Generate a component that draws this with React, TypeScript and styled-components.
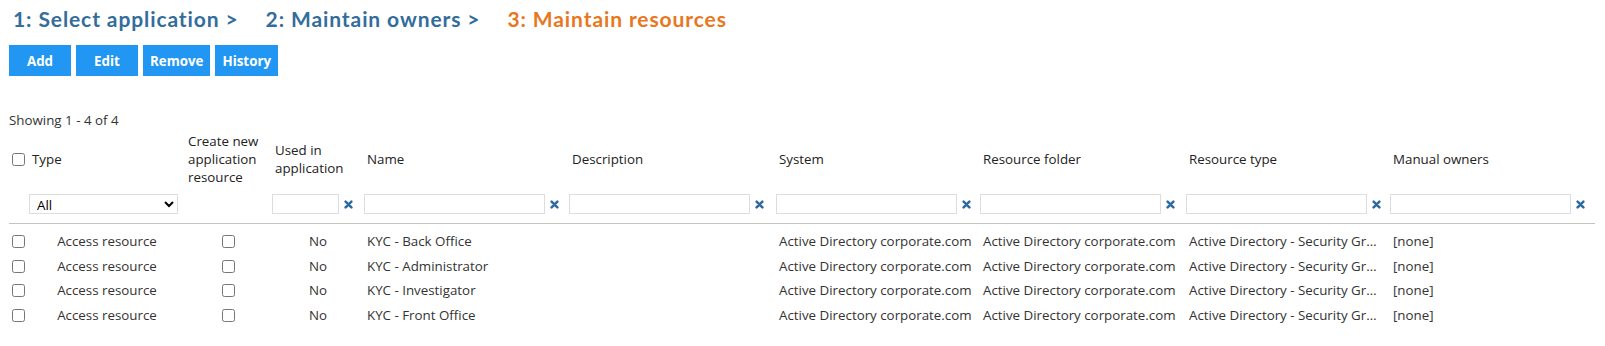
import React from 'react';
import styled, { createGlobalStyle } from 'styled-components';

const GlobalStyle = createGlobalStyle`
  body {
    margin: 0;
    background: #fff;
    font-family: "Open Sans", "Liberation Sans", sans-serif;
    font-size: 13.33px;
    color: #333;
  }
`;

const Page = styled.div`
  padding: 5px 9px 0 9px;
`;

const Steps = styled.div`
  display: flex;
  align-items: baseline;
  gap: 27px;
  padding-left: 4px;
  height: 28px;
`;

const Step = styled.span<{ $active?: boolean }>`
  font-family: Lato, "Open Sans", sans-serif;
  font-weight: 700;
  font-size: 21px;
  letter-spacing: 0.9px;
  line-height: 28px;
  color: ${props => (props.$active ? '#e8771e' : '#336d9c')};
`;

const Toolbar = styled.div`
  display: flex;
  gap: 5px;
  margin-top: 12px;
`;

const ActionButton = styled.button`
  min-width: 62px;
  height: 31px;
  padding: 0 7px;
  border: none;
  background: #2196f3;
  color: #fff;
  font-family: "Open Sans", sans-serif;
  font-weight: 700;
  font-size: 13.33px;
  cursor: pointer;
`;

const Summary = styled.div`
  margin-top: 35px;
  line-height: 18px;
  color: #333;
`;

const Grid = styled.table`
  width: 1586px;
  table-layout: fixed;
  border-collapse: collapse;
  margin-top: -2px;
`;

const HeadCell = styled.th`
  padding: 4px 3px 0 3px;
  height: 56px;
  font-weight: 400;
  text-align: left;
  vertical-align: middle;
  line-height: 18px;
  color: #222;
`;

const FilterCell = styled.td`
  padding: 7px 0 9px 0;
  border-bottom: 1px solid #c4c4c4;
  white-space: nowrap;
  vertical-align: middle;
  height: 20px;
`;

const FilterWrap = styled.div`
  display: flex;
  align-items: center;
  gap: 5px;
`;

const FilterInput = styled.input<{ $w?: number }>`
  box-sizing: border-box;
  width: ${props => props.$w ?? 181}px;
  height: 20px;
  border: 1px solid #ddd;
  padding: 0 4px;
  font-family: "Open Sans", sans-serif;
  font-size: 13px;
  outline: none;
`;

const TypeSelect = styled.select`
  box-sizing: border-box;
  width: 149px;
  height: 20px;
  border: 1px solid #ddd;
  border-radius: 0;
  background: #fff;
  font-family: "Open Sans", sans-serif;
  font-size: 13.33px;
  color: #000;
  padding: 0 3px;
`;

const ClearIcon = styled.svg`
  width: 9px;
  height: 9px;
  flex: none;
  color: #2f6a9e;
`;

const Cell = styled.td<{ $center?: boolean; $clip?: boolean }>`
  padding: 0 ${props => (props.$clip ? '12px' : '3px')} 0 3px;
  height: 24.6px;
  line-height: 18px;
  text-align: ${props => (props.$center ? 'center' : 'left')};
  white-space: nowrap;
  overflow: hidden;
  text-overflow: ${props => (props.$clip ? 'ellipsis' : 'clip')};
  color: #333;
`;

const FirstRow = styled.tr`
  td {
    padding-top: 5px;
  }
`;

const Check = styled.input`
  margin: 3px;
  vertical-align: middle;
`;

const columns = [20, 156, 87, 92, 205, 207, 204, 206, 204, 205];

const rows = [
  'KYC - Back Office',
  'KYC - Administrator',
  'KYC - Investigator',
  'KYC - Front Office',
];

function Clear() {
  return (
    <ClearIcon viewBox="0 0 10 10">
      <path d="M1.8 1.8 L8.2 8.2 M8.2 1.8 L1.8 8.2" stroke="currentColor" strokeWidth="2.8" strokeLinecap="round" />
    </ClearIcon>
  );
}

function TextFilter({ width }: { width?: number }) {
  return (
    <FilterWrap>
      <FilterInput $w={width} />
      <Clear />
    </FilterWrap>
  );
}

function DataRow({ name, first }: { name: string; first: boolean }) {
  const Row = first ? FirstRow : 'tr';
  return (
    <Row>
      <Cell style={{ paddingLeft: 0, paddingRight: 0 }}><Check type="checkbox" /></Cell>
      <Cell $center>Access resource</Cell>
      <Cell $center><Check type="checkbox" /></Cell>
      <Cell $center>No</Cell>
      <Cell>{name}</Cell>
      <Cell></Cell>
      <Cell>Active Directory corporate.com</Cell>
      <Cell>Active Directory corporate.com</Cell>
      <Cell $clip>Active Directory - Security Groups</Cell>
      <Cell>[none]</Cell>
    </Row>
  );
}

export default function App() {
  return (
    <Page>
      <GlobalStyle />
      <Steps>
        <Step>1: Select application &gt;</Step>
        <Step>2: Maintain owners &gt;</Step>
        <Step $active>3: Maintain resources</Step>
      </Steps>
      <Toolbar>
        <ActionButton>Add</ActionButton>
        <ActionButton>Edit</ActionButton>
        <ActionButton>Remove</ActionButton>
        <ActionButton>History</ActionButton>
      </Toolbar>
      <Summary>Showing 1 - 4 of 4</Summary>
      <Grid>
        <colgroup>
          {columns.map((w, i) => <col key={i} style={{ width: w }} />)}
        </colgroup>
        <thead>
          <tr>
            <HeadCell style={{ paddingLeft: 0, paddingRight: 0 }}><Check type="checkbox" /></HeadCell>
            <HeadCell>Type</HeadCell>
            <HeadCell>Create new application resource</HeadCell>
            <HeadCell>Used in application</HeadCell>
            <HeadCell>Name</HeadCell>
            <HeadCell>Description</HeadCell>
            <HeadCell>System</HeadCell>
            <HeadCell>Resource folder</HeadCell>
            <HeadCell>Resource type</HeadCell>
            <HeadCell>Manual owners</HeadCell>
          </tr>
          <tr>
            <FilterCell></FilterCell>
            <FilterCell>
              <TypeSelect defaultValue="All">
                <option>All</option>
                <option>Access resource</option>
              </TypeSelect>
            </FilterCell>
            <FilterCell></FilterCell>
            <FilterCell><TextFilter width={67} /></FilterCell>
            <FilterCell><TextFilter /></FilterCell>
            <FilterCell><TextFilter /></FilterCell>
            <FilterCell><TextFilter /></FilterCell>
            <FilterCell><TextFilter /></FilterCell>
            <FilterCell><TextFilter /></FilterCell>
            <FilterCell><TextFilter /></FilterCell>
          </tr>
        </thead>
        <tbody>
          {rows.map((name, i) => <DataRow key={name} name={name} first={i === 0} />)}
        </tbody>
      </Grid>
    </Page>
  );
}
